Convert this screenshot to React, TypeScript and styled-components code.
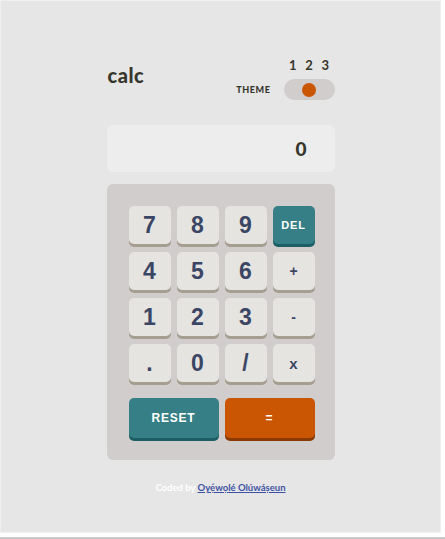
import styled, { createGlobalStyle } from "styled-components";

const GlobalStyle = createGlobalStyle`
  body {
    margin: 0;
    background: #ffffff;
    font-family: "Liberation Sans", Arial, sans-serif;
  }
`;

const Page = styled.div`
  width: 441px;
  height: 533px;
  box-sizing: border-box;
  border: 1px solid #efefef;
  background: #e6e6e6;
  display: flex;
  flex-direction: column;
  align-items: center;
  padding-top: 56px;
`;

const BottomRule = styled.div`
  width: 445px;
  height: 2px;
  margin-top: 4px;
  background: #c9c9c9;
`;

const Calculator = styled.main`
  width: 228px;
  display: flex;
  flex-direction: column;
`;

const Header = styled.header`
  display: flex;
  justify-content: space-between;
  align-items: flex-end;
  height: 43px;
`;

const Logo = styled.h1`
  margin: 0 0 13px 1px;
  font-family: "Lato", sans-serif;
  font-weight: 900;
  font-size: 20px;
  letter-spacing: 0.5px;
  color: #36362c;
`;

const ThemeArea = styled.div`
  display: flex;
  align-items: flex-end;
  gap: 13px;
`;

const ThemeLabel = styled.span`
  font-family: "Lato", sans-serif;
  font-weight: 900;
  font-size: 9px;
  letter-spacing: 0.6px;
  color: #36362c;
  margin-bottom: 5px;
`;

const Switcher = styled.div`
  display: flex;
  flex-direction: column;
  align-items: center;
  gap: 7px;
`;

const Numbers = styled.div`
  display: flex;
  justify-content: space-between;
  width: 40px;
  line-height: 14px;
  font-family: "Lato", sans-serif;
  font-weight: 700;
  font-size: 13px;
  color: #36362c;
`;

const Toggle = styled.div`
  width: 51px;
  height: 21px;
  border-radius: 11px;
  background: #d2cdcd;
  display: flex;
  align-items: center;
  justify-content: center;
`;

const Knob = styled.span`
  width: 14px;
  height: 14px;
  border-radius: 50%;
  background: #ca5502;
`;

const Screen = styled.div`
  margin-top: 25px;
  height: 47px;
  border-radius: 6px;
  background: #ededed;
  display: flex;
  align-items: center;
  justify-content: flex-end;
  padding-right: 28px;
  font-family: "Lato", sans-serif;
  font-weight: 900;
  font-size: 19px;
  color: #36362c;
`;

const Keypad = styled.div`
  margin-top: 12px;
  background: #d2cdcd;
  border-radius: 6px;
  padding: 22px 20px 19px 22px;
  display: grid;
  grid-template-columns: repeat(4, 42px);
  grid-template-rows: repeat(4, 41px) auto;
  column-gap: 6px;
  row-gap: 5px;
`;

type KeyVariant = "light" | "teal" | "orange";

const keyColors: Record<KeyVariant, { bg: string; shadow: string; text: string }> = {
  light: { bg: "#e5e4e1", shadow: "#a69d91", text: "#3b4664" },
  teal: { bg: "#377f86", shadow: "#1b5f65", text: "#ffffff" },
  orange: { bg: "#ca5502", shadow: "#893901", text: "#ffffff" },
};

const Key = styled.button<{ $variant?: KeyVariant; $size?: number }>`
  border: none;
  padding: 0;
  margin: 0;
  height: 38px;
  border-radius: 5px;
  background: ${(p) => keyColors[p.$variant || "light"].bg};
  box-shadow: 0 3px 0 ${(p) => keyColors[p.$variant || "light"].shadow};
  color: ${(p) => keyColors[p.$variant || "light"].text};
  font-family: "Liberation Sans", Arial, sans-serif;
  font-weight: 700;
  font-size: ${(p) => p.$size || 23}px;
  letter-spacing: ${(p) => (p.$size && p.$size < 14 ? "0.8px" : "0")};
  display: flex;
  align-items: center;
  justify-content: center;
  cursor: pointer;
`;

const BigRow = styled.div`
  grid-column: 1 / -1;
  display: grid;
  grid-template-columns: 1fr 1fr;
  column-gap: 6px;
  margin-top: 8px;
  height: 43px;
  & > button {
    height: 40px;
  }
`;

const Footer = styled.footer`
  margin-top: 22px;
  text-align: center;
  font-family: "Lato", sans-serif;
  font-weight: 700;
  font-size: 9.5px;
  color: #ffffff;
  a {
    color: #3e52a3;
    text-decoration: underline;
  }
`;

const keys: { label: string; variant?: KeyVariant; size?: number }[] = [
  { label: "7" },
  { label: "8" },
  { label: "9" },
  { label: "DEL", variant: "teal", size: 11 },
  { label: "4" },
  { label: "5" },
  { label: "6" },
  { label: "+", size: 14 },
  { label: "1" },
  { label: "2" },
  { label: "3" },
  { label: "-", size: 14 },
  { label: "." },
  { label: "0" },
  { label: "/" },
  { label: "x", size: 15 },
];

export default function App() {
  return (
    <>
      <GlobalStyle />
      <Page>
        <Calculator>
          <Header>
            <Logo>calc</Logo>
            <ThemeArea>
              <ThemeLabel>THEME</ThemeLabel>
              <Switcher>
                <Numbers>
                  <span>1</span>
                  <span>2</span>
                  <span>3</span>
                </Numbers>
                <Toggle>
                  <Knob />
                </Toggle>
              </Switcher>
            </ThemeArea>
          </Header>
          <Screen>0</Screen>
          <Keypad>
            {keys.map((k) => (
              <Key key={k.label} $variant={k.variant} $size={k.size}>
                {k.label}
              </Key>
            ))}
            <BigRow>
              <Key $variant="teal" $size={12}>RESET</Key>
              <Key $variant="orange" $size={12}>=</Key>
            </BigRow>
          </Keypad>
          <Footer>
            Coded by <a href="#">Oyẹ́wọlé Olúwáṣeun</a>
          </Footer>
        </Calculator>
      </Page>
      <BottomRule />
    </>
  );
}
